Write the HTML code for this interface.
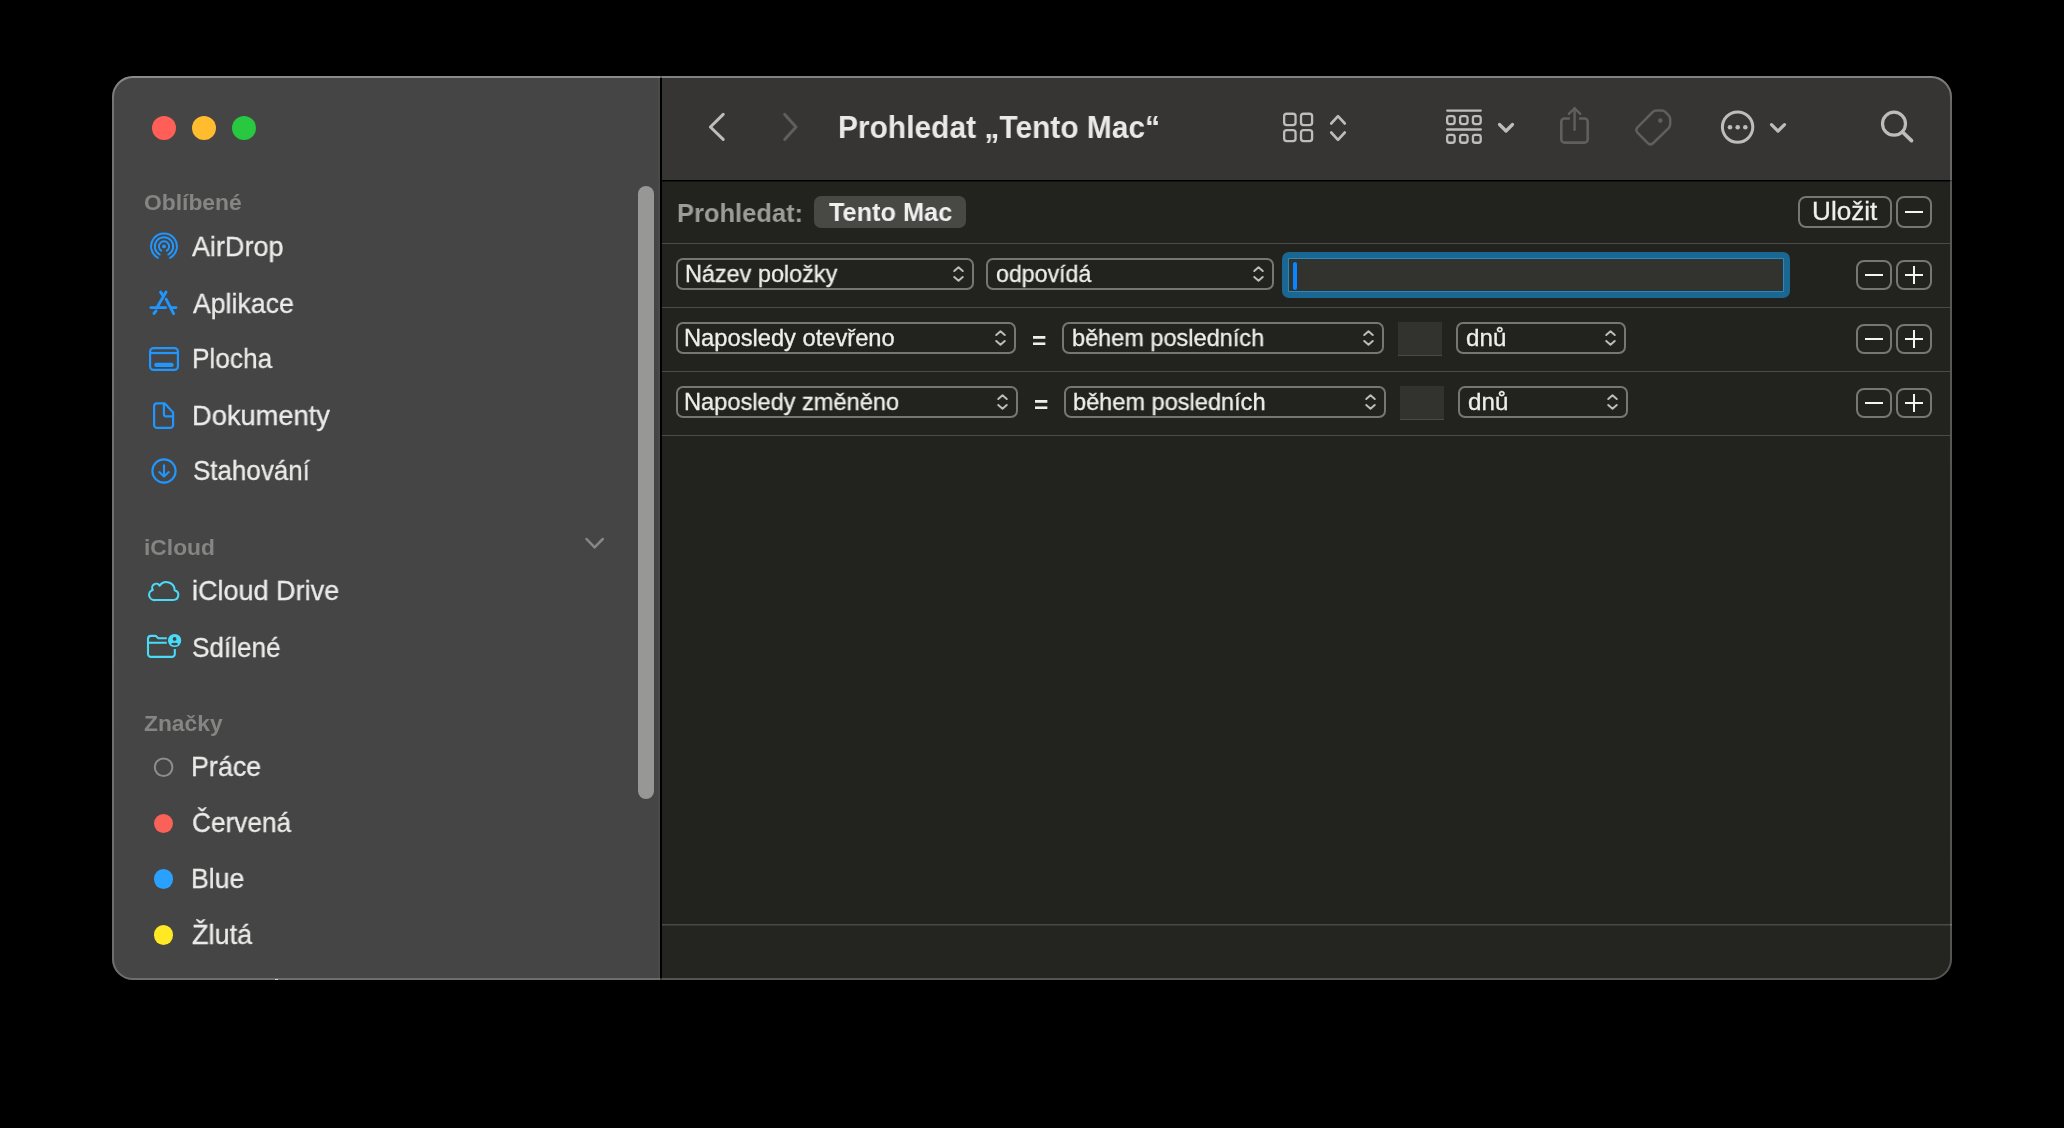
<!DOCTYPE html>
<html><head><meta charset="utf-8"><style>
html,body{margin:0;padding:0;background:#000;width:2064px;height:1128px;overflow:hidden;font-family:"Liberation Sans", sans-serif}
.t{position:absolute;white-space:nowrap;-webkit-font-smoothing:antialiased;will-change:transform}
svg{overflow:visible}
</style></head><body>
<div id="win" style="position:absolute;left:112px;top:76px;width:1840px;height:904px;border-radius:21px;overflow:hidden;background:#22221F">
<div style="position:absolute;left:0px;top:0px;width:548px;height:904px;background:#454545"></div>
<div style="position:absolute;left:546px;top:0px;width:2px;height:904px;background:#4a4a49"></div>
<div style="position:absolute;left:548px;top:0px;width:2px;height:904px;background:#000"></div>
<div style="position:absolute;left:550px;top:0px;width:1290px;height:104px;background:#363533"></div>
<div style="position:absolute;left:550px;top:104px;width:1290px;height:1px;background:#000"></div>
<div style="position:absolute;left:550px;top:105px;width:1290px;height:1px;background:#121211"></div>
<div style="position:absolute;left:550px;top:849px;width:1290px;height:55px;background:#242420"></div>
<div style="position:absolute;left:550px;top:848px;width:1290px;height:1px;background:#484844"></div>
<div style="position:absolute;left:550px;top:849px;width:1290px;height:1px;background:#373733"></div>
</div>
<svg style="position:absolute;left:112px;top:76px" width="1840" height="904" viewBox="0 0 1840 904"><defs><linearGradient id="bg1" gradientUnits="userSpaceOnUse" x1="0" y1="0" x2="0" y2="904"><stop offset="0" stop-color="#fff" stop-opacity="0.38"/><stop offset="0.03" stop-color="#fff" stop-opacity="0.25"/><stop offset="1" stop-color="#fff" stop-opacity="0.22"/></linearGradient></defs><rect x="1" y="1" width="1838" height="902" rx="20" ry="20" fill="none" stroke="url(#bg1)" stroke-width="2"/></svg>
<div style="position:absolute;left:275px;top:978.6px;width:3px;height:1.4px;background:#d0d0ce"></div>
<div style="position:absolute;left:152px;top:116px;width:24px;height:24px;border-radius:50%;background:#FF5F57"></div>
<div style="position:absolute;left:192px;top:116px;width:24px;height:24px;border-radius:50%;background:#FEBC2E"></div>
<div style="position:absolute;left:232px;top:116px;width:24px;height:24px;border-radius:50%;background:#28C840"></div>
<div style="position:absolute;left:638px;top:186px;width:16px;height:613px;border-radius:8px;background:#979795"></div>
<div class="t" style="left:143.55px;top:192.45px;font-size:21.8px;line-height:21.8px;color:#858584;font-weight:bold;transform:scaleX(1.0478);transform-origin:0 0;">Oblíbené</div>
<div class="t" style="left:143.55px;top:536.55px;font-size:21.8px;line-height:21.8px;color:#858584;font-weight:bold;transform:scaleX(1.0462);transform-origin:0 0;">iCloud</div>
<div class="t" style="left:143.85px;top:712.65px;font-size:21.8px;line-height:21.8px;color:#858584;font-weight:bold;transform:scaleX(1.0459);transform-origin:0 0;">Značky</div>
<div class="t" style="left:192.30px;top:233.48px;font-size:27.9px;line-height:27.9px;color:#ebebea;font-weight:normal;transform:scaleX(0.9681);transform-origin:0 0;-webkit-text-stroke:0.3px #ebebea;">AirDrop</div>
<div class="t" style="left:192.80px;top:289.68px;font-size:27.9px;line-height:27.9px;color:#ebebea;font-weight:normal;transform:scaleX(0.9562);transform-origin:0 0;-webkit-text-stroke:0.3px #ebebea;">Aplikace</div>
<div class="t" style="left:191.62px;top:345.08px;font-size:27.9px;line-height:27.9px;color:#ebebea;font-weight:normal;transform:scaleX(0.9405);transform-origin:0 0;-webkit-text-stroke:0.3px #ebebea;">Plocha</div>
<div class="t" style="left:191.54px;top:401.58px;font-size:27.9px;line-height:27.9px;color:#ebebea;font-weight:normal;transform:scaleX(0.9784);transform-origin:0 0;-webkit-text-stroke:0.3px #ebebea;">Dokumenty</div>
<div class="t" style="left:192.57px;top:456.68px;font-size:27.9px;line-height:27.9px;color:#ebebea;font-weight:normal;transform:scaleX(0.9312);transform-origin:0 0;-webkit-text-stroke:0.3px #ebebea;">Stahování</div>
<div class="t" style="left:192.23px;top:577.48px;font-size:27.9px;line-height:27.9px;color:#ebebea;font-weight:normal;transform:scaleX(0.9687);transform-origin:0 0;-webkit-text-stroke:0.3px #ebebea;">iCloud Drive</div>
<div class="t" style="left:192.26px;top:633.58px;font-size:27.9px;line-height:27.9px;color:#ebebea;font-weight:normal;transform:scaleX(0.9376);transform-origin:0 0;-webkit-text-stroke:0.3px #ebebea;">Sdílené</div>
<div class="t" style="left:191.27px;top:753.28px;font-size:27.9px;line-height:27.9px;color:#ebebea;font-weight:normal;transform:scaleX(0.9629);transform-origin:0 0;-webkit-text-stroke:0.3px #ebebea;">Práce</div>
<div class="t" style="left:191.86px;top:809.28px;font-size:27.9px;line-height:27.9px;color:#ebebea;font-weight:normal;transform:scaleX(0.9390);transform-origin:0 0;-webkit-text-stroke:0.3px #ebebea;">Červená</div>
<div class="t" style="left:191.49px;top:865.28px;font-size:27.9px;line-height:27.9px;color:#ebebea;font-weight:normal;transform:scaleX(0.9566);transform-origin:0 0;-webkit-text-stroke:0.3px #ebebea;">Blue</div>
<div class="t" style="left:192.23px;top:921.48px;font-size:27.9px;line-height:27.9px;color:#ebebea;font-weight:normal;transform:scaleX(0.9705);transform-origin:0 0;-webkit-text-stroke:0.3px #ebebea;">Žlutá</div>
<svg style="position:absolute;left:148px;top:230px" width="32" height="32" viewBox="0 0 32 32"><g fill="none" stroke="#2196FF" stroke-width="1.95" stroke-linecap="round"><path d="M10 27.82 A12.9 12.9 0 1 1 22 27.82"/><path d="M11.7 24.53 A9.2 9.2 0 1 1 20.3 24.53"/><path d="M13.2 20.66 A5.1 5.1 0 1 1 18.8 20.66"/></g><circle cx="16" cy="16.4" r="1.95" fill="#2196FF"/></svg>
<svg style="position:absolute;left:144px;top:284px" width="40" height="36" viewBox="0 0 40 36"><g fill="none" stroke="#2196FF" stroke-width="2.9" stroke-linecap="round"><path d="M22 8.1 L13.6 22.6"/><path d="M12.1 26.8 L9.9 29.5"/><path d="M16.6 8.1 L19 11.6"/><path d="M22.1 15.2 L29.6 29.6"/><path d="M6.9 23.6 H21.6"/><path d="M27.4 23.6 H31.9"/></g></svg>
<svg style="position:absolute;left:148px;top:346.4px" width="32" height="26" viewBox="0 0 32 26"><g fill="none" stroke="#2196FF" stroke-width="2.2"><rect x="2.1" y="2.1" width="27.8" height="21.8" rx="3.5"/><path d="M2 7 H30"/></g><rect x="6.2" y="16.8" width="19.5" height="4.2" rx="2" fill="#2196FF"/></svg>
<svg style="position:absolute;left:150px;top:400px" width="28" height="32" viewBox="0 0 28 32"><g fill="none" stroke="#2196FF" stroke-width="2.2" stroke-linejoin="round"><path d="M7.1 3.3 H14.6 L23.1 12.6 V24.9 A3 3 0 0 1 20.1 27.9 H7.1 A3 3 0 0 1 4.1 24.9 V6.3 A3 3 0 0 1 7.1 3.3 Z"/><path d="M13.9 3.5 V14.3 A2 2 0 0 0 15.9 16.3 H23.1"/></g></svg>
<svg style="position:absolute;left:148px;top:455px" width="32" height="32" viewBox="0 0 32 32"><g fill="none" stroke="#2196FF" stroke-width="2.1" stroke-linecap="round" stroke-linejoin="round"><circle cx="16" cy="16" r="11.6"/><path d="M16 10.2 V21"/><path d="M11.3 17.1 L16 21.5 L20.7 17.1"/></g></svg>
<svg style="position:absolute;left:142px;top:570px" width="44" height="36" viewBox="0 0 44 36"><g fill="none" stroke="#48DCF8" stroke-width="2.1" stroke-linejoin="round"><path d="M13.2 30 H31.3 A5 5 0 0 0 32.7 20.2 A8.3 8.3 0 0 0 17.6 15.6 A4 4 0 0 0 10.8 19.9 A5.2 5.2 0 0 0 13.2 30 Z"/></g></svg>
<svg style="position:absolute;left:146px;top:632px" width="38" height="28" viewBox="0 0 38 28"><g fill="none" stroke="#48DCF8" stroke-width="2.1" stroke-linejoin="round" stroke-linecap="butt"><path d="M20.8 10.8 H2 M20.8 6.2 H12.3 L10.4 4.4 A1.6 1.6 0 0 0 9.3 3.9 H5 A3 3 0 0 0 2 6.9 V21.9 A3 3 0 0 0 5 24.9 H25.8 A3 3 0 0 0 28.8 21.9 V17"/></g><circle cx="28.6" cy="8.5" r="6.6" fill="#48DCF8"/><circle cx="28.6" cy="6.9" r="1.9" fill="#454545"/><ellipse cx="28.6" cy="12.1" rx="3.3" ry="1.3" fill="#454545"/></svg>
<svg style="position:absolute;left:582px;top:535px" width="24" height="16" viewBox="0 0 24 16"><path d="M4.5 4 L12.6 12.3 L20.8 4" fill="none" stroke="#878786" stroke-width="2.5" stroke-linecap="round" stroke-linejoin="round"/></svg>
<svg style="position:absolute;left:153px;top:757px" width="22" height="22" viewBox="0 0 22 22"><circle cx="10.6" cy="10.2" r="8.8" fill="none" stroke="#8d8d8c" stroke-width="2"/></svg>
<div style="position:absolute;left:153.9px;top:813.5px;width:19.6px;height:19.6px;border-radius:50%;background:#FA6159"></div>
<div style="position:absolute;left:153.9px;top:869.2px;width:19.6px;height:19.6px;border-radius:50%;background:#2AA0FF"></div>
<div style="position:absolute;left:153.9px;top:925.1px;width:19.6px;height:19.6px;border-radius:50%;background:#FFE925"></div>
<svg style="position:absolute;left:700px;top:105px" width="110" height="44" viewBox="0 0 110 44"><path d="M23.2 9.4 L10.4 22 L23.2 34.4" fill="none" stroke="#bdbdbc" stroke-width="3" stroke-linecap="round" stroke-linejoin="round"/><path d="M84.7 9.4 L96 22 L84.7 34.4" fill="none" stroke="#5f5f5e" stroke-width="3" stroke-linecap="round" stroke-linejoin="round"/></svg>
<div class="t" style="left:837.93px;top:111.01px;font-size:32px;line-height:32px;color:#e9e9e8;font-weight:bold;transform:scaleX(0.9353);transform-origin:0 0;">Prohledat „Tento Mac“</div>
<svg style="position:absolute;left:1278px;top:105px" width="76" height="44" viewBox="0 0 76 44"><g fill="none" stroke="#bdbdbc" stroke-width="2.3"><rect x="6.15" y="8.75" width="11.4" height="11.3" rx="2.6"/><rect x="23" y="8.75" width="11.1" height="11.3" rx="2.6"/><rect x="6.15" y="25.15" width="11.4" height="11.0" rx="2.6"/><rect x="23" y="25.15" width="11.1" height="11.0" rx="2.6"/></g><g fill="none" stroke="#bdbdbc" stroke-width="2.6" stroke-linecap="round" stroke-linejoin="round"><path d="M53.2 18.5 L60 11.2 L66.8 18.5"/><path d="M53.2 27.5 L60 34.8 L66.8 27.5"/></g></svg>
<svg style="position:absolute;left:1440px;top:100px" width="80" height="50" viewBox="0 0 80 50"><g fill="none" stroke="#bdbdbc" stroke-width="2.3" stroke-linecap="round"><path d="M7.2 10.6 H40.8"/><path d="M7.2 29.5 H40.8"/><rect x="7.15" y="16.05" width="7.5" height="8.0" rx="2.3"/><rect x="20.05" y="16.05" width="7.5" height="8.0" rx="2.3"/><rect x="32.9" y="16.05" width="7.8" height="8.0" rx="2.3"/><rect x="7.15" y="34.95" width="7.5" height="7.8" rx="2.3"/><rect x="20.05" y="34.95" width="7.5" height="7.8" rx="2.3"/><rect x="32.9" y="34.95" width="7.8" height="7.8" rx="2.3"/></g><path d="M59.5 24.5 L66 31 L72.5 24.5" fill="none" stroke="#bdbdbc" stroke-width="3.2" stroke-linecap="round" stroke-linejoin="round"/></svg>
<svg style="position:absolute;left:1552px;top:100px" width="44" height="50" viewBox="0 0 44 50"><g fill="none" stroke="#5f5f5e" stroke-width="2.6" stroke-linejoin="round"><path d="M17.9 18.5 H12.5 A3.2 3.2 0 0 0 9.3 21.7 V39.4 A3.2 3.2 0 0 0 12.5 42.6 H32.5 A3.2 3.2 0 0 0 35.7 39.4 V21.7 A3.2 3.2 0 0 0 32.5 18.5 H27"/></g><g fill="none" stroke="#5f5f5e" stroke-width="2.4" stroke-linecap="round" stroke-linejoin="round"><path d="M22.6 8.3 V29.8"/><path d="M16.9 13.9 L22.6 8.3 L28.3 13.9"/></g></svg>
<svg style="position:absolute;left:1628px;top:102px" width="50" height="50" viewBox="0 0 50 50"><g fill="none" stroke="#5f5f5e" stroke-width="2.5" stroke-linejoin="round"><path d="M24.35 10.28 Q26.10 8.50 28.60 8.50 L33.90 8.50 Q35.90 8.50 37.28 9.95 L40.82 13.65 Q42.20 15.10 42.20 17.10 L42.20 22.10 Q42.20 24.60 40.41 26.34 L25.27 41.02 Q22.40 43.80 19.60 40.94 L9.70 30.86 Q6.90 28.00 9.71 25.15 Z"/></g><circle cx="32.3" cy="18.6" r="2.3" fill="#5f5f5e"/></svg>
<svg style="position:absolute;left:1716px;top:105px" width="80" height="44" viewBox="0 0 80 44"><circle cx="21.6" cy="22.1" r="15.2" fill="none" stroke="#bdbdbc" stroke-width="3"/><circle cx="14" cy="22.3" r="2.3" fill="#bdbdbc"/><circle cx="21.7" cy="22.3" r="2.3" fill="#bdbdbc"/><circle cx="29.3" cy="22.3" r="2.3" fill="#bdbdbc"/><path d="M55.5 19.6 L62 26.1 L68.5 19.6" fill="none" stroke="#bdbdbc" stroke-width="3.2" stroke-linecap="round" stroke-linejoin="round"/></svg>
<svg style="position:absolute;left:1870px;top:100px" width="50" height="50" viewBox="0 0 50 50"><circle cx="24" cy="23.7" r="11.5" fill="none" stroke="#bdbdbc" stroke-width="3.2"/><path d="M32.5 32 L41.5 40.6" fill="none" stroke="#bdbdbc" stroke-width="3.7" stroke-linecap="round"/></svg>
<div class="t" style="left:676.68px;top:199.87px;font-size:26.5px;line-height:26.5px;color:#9d9d98;font-weight:bold;transform:scaleX(0.9614);transform-origin:0 0;">Prohledat:</div>
<div style="position:absolute;left:814px;top:196px;width:152px;height:32px;border-radius:7px;background:#484845"></div>
<div class="t" style="left:829.20px;top:199.14px;font-size:26.3px;line-height:26.3px;color:#f0f0ef;font-weight:bold;transform:scaleX(0.9622);transform-origin:0 0;">Tento Mac</div>
<div style="position:absolute;left:662px;top:243px;width:1288px;height:1px;background:#4b4b47"></div>
<div style="position:absolute;left:662px;top:307px;width:1288px;height:1px;background:#4b4b47"></div>
<div style="position:absolute;left:662px;top:371px;width:1288px;height:1px;background:#4b4b47"></div>
<div style="position:absolute;left:662px;top:435px;width:1288px;height:1px;background:#4b4b47"></div>
<div style="position:absolute;left:1798px;top:196px;width:94px;height:32px;border:2px solid #777772;border-radius:8px;box-sizing:border-box"></div>
<div class="t" style="left:1811.66px;top:199.14px;font-size:25.7px;line-height:25.7px;color:#eeeeea;font-weight:normal;transform:scaleX(1.0177);transform-origin:0 0;-webkit-text-stroke:0.3px #eeeeea;">Uložit</div>
<div style="position:absolute;left:1896px;top:196px;width:36px;height:32px;border:2px solid #777772;border-radius:8px;box-sizing:border-box"></div>
<div style="position:absolute;left:1905px;top:211px;width:18px;height:2px;background:#f4f4f0"></div>
<div style="position:absolute;left:676px;top:258px;width:298px;height:32px;border:2px solid #777772;border-radius:7px;box-sizing:border-box"></div>
<div class="t" style="left:684.72px;top:263.14px;font-size:23.7px;line-height:23.7px;color:#eeeeea;font-weight:normal;transform:scaleX(0.9888);transform-origin:0 0;-webkit-text-stroke:0.3px #eeeeea;">Název položky</div>
<svg style="position:absolute;left:951px;top:264.0px" width="15" height="20" viewBox="0 0 15 20"><g fill="none" stroke="#bcbcb8" stroke-width="2" stroke-linecap="round" stroke-linejoin="round"><path d="M3.25 7.0 L7.5 3.2 L11.75 7.0"/><path d="M3.25 13.0 L7.5 16.8 L11.75 13.0"/></g></svg>
<div style="position:absolute;left:986px;top:258px;width:288px;height:32px;border:2px solid #777772;border-radius:7px;box-sizing:border-box"></div>
<div class="t" style="left:995.72px;top:263.14px;font-size:23.7px;line-height:23.7px;color:#eeeeea;font-weight:normal;transform:scaleX(0.9784);transform-origin:0 0;-webkit-text-stroke:0.3px #eeeeea;">odpovídá</div>
<svg style="position:absolute;left:1251px;top:264.0px" width="15" height="20" viewBox="0 0 15 20"><g fill="none" stroke="#bcbcb8" stroke-width="2" stroke-linecap="round" stroke-linejoin="round"><path d="M3.25 7.0 L7.5 3.2 L11.75 7.0"/><path d="M3.25 13.0 L7.5 16.8 L11.75 13.0"/></g></svg>
<div style="position:absolute;left:1282px;top:252px;width:508px;height:46px;border-radius:7px;background:#1b6794"></div>
<div style="position:absolute;left:1288px;top:258px;width:496px;height:34px;background:#2b88bd"></div>
<div style="position:absolute;left:1289px;top:259px;width:494px;height:32px;background:#32322e"></div>
<div style="position:absolute;left:1293px;top:262px;width:4.3px;height:28px;border-radius:2.2px;background:#0a84ff"></div>
<div style="position:absolute;left:1856px;top:260px;width:36px;height:30px;border:2px solid #777772;border-radius:8px;box-sizing:border-box"></div>
<div style="position:absolute;left:1865px;top:274px;width:18px;height:2px;background:#f4f4f0"></div>
<div style="position:absolute;left:1896px;top:260px;width:36px;height:30px;border:2px solid #777772;border-radius:8px;box-sizing:border-box"></div>
<div style="position:absolute;left:1905px;top:274px;width:18px;height:2px;background:#f4f4f0"></div>
<div style="position:absolute;left:1913px;top:266px;width:2px;height:18px;background:#f4f4f0"></div>
<div style="position:absolute;left:676px;top:322px;width:340px;height:32px;border:2px solid #777772;border-radius:7px;box-sizing:border-box"></div>
<div class="t" style="left:684.30px;top:327.14px;font-size:23.7px;line-height:23.7px;color:#eeeeea;font-weight:normal;-webkit-text-stroke:0.3px #eeeeea;">Naposledy otevřeno</div>
<svg style="position:absolute;left:993px;top:328.0px" width="15" height="20" viewBox="0 0 15 20"><g fill="none" stroke="#bcbcb8" stroke-width="2" stroke-linecap="round" stroke-linejoin="round"><path d="M3.25 7.0 L7.5 3.2 L11.75 7.0"/><path d="M3.25 13.0 L7.5 16.8 L11.75 13.0"/></g></svg>
<div class="t" style="left:1031.77px;top:329.94px;font-size:23.7px;line-height:23.7px;color:#eeeeea;font-weight:bold;transform:scaleX(1.0333);transform-origin:0 0;">=</div>
<div style="position:absolute;left:1062px;top:322px;width:322px;height:32px;border:2px solid #777772;border-radius:7px;box-sizing:border-box"></div>
<div class="t" style="left:1071.81px;top:327.14px;font-size:23.7px;line-height:23.7px;color:#eeeeea;font-weight:normal;transform:scaleX(0.9922);transform-origin:0 0;-webkit-text-stroke:0.3px #eeeeea;">během posledních</div>
<svg style="position:absolute;left:1361px;top:328.0px" width="15" height="20" viewBox="0 0 15 20"><g fill="none" stroke="#bcbcb8" stroke-width="2" stroke-linecap="round" stroke-linejoin="round"><path d="M3.25 7.0 L7.5 3.2 L11.75 7.0"/><path d="M3.25 13.0 L7.5 16.8 L11.75 13.0"/></g></svg>
<div style="position:absolute;left:1398px;top:322px;width:44px;height:34px;background:#32322e;border-bottom:1px solid #4a4a46;box-sizing:border-box"></div>
<div style="position:absolute;left:1456px;top:322px;width:170px;height:32px;border:2px solid #777772;border-radius:7px;box-sizing:border-box"></div>
<div class="t" style="left:1465.78px;top:327.14px;font-size:23.7px;line-height:23.7px;color:#eeeeea;font-weight:normal;transform:scaleX(1.0216);transform-origin:0 0;-webkit-text-stroke:0.3px #eeeeea;">dnů</div>
<svg style="position:absolute;left:1603px;top:328.0px" width="15" height="20" viewBox="0 0 15 20"><g fill="none" stroke="#bcbcb8" stroke-width="2" stroke-linecap="round" stroke-linejoin="round"><path d="M3.25 7.0 L7.5 3.2 L11.75 7.0"/><path d="M3.25 13.0 L7.5 16.8 L11.75 13.0"/></g></svg>
<div style="position:absolute;left:1856px;top:324px;width:36px;height:30px;border:2px solid #777772;border-radius:8px;box-sizing:border-box"></div>
<div style="position:absolute;left:1865px;top:338px;width:18px;height:2px;background:#f4f4f0"></div>
<div style="position:absolute;left:1896px;top:324px;width:36px;height:30px;border:2px solid #777772;border-radius:8px;box-sizing:border-box"></div>
<div style="position:absolute;left:1905px;top:338px;width:18px;height:2px;background:#f4f4f0"></div>
<div style="position:absolute;left:1913px;top:330px;width:2px;height:18px;background:#f4f4f0"></div>
<div style="position:absolute;left:676px;top:386px;width:342px;height:32px;border:2px solid #777772;border-radius:7px;box-sizing:border-box"></div>
<div class="t" style="left:684.31px;top:391.14px;font-size:23.7px;line-height:23.7px;color:#eeeeea;font-weight:normal;transform:scaleX(0.9962);transform-origin:0 0;-webkit-text-stroke:0.3px #eeeeea;">Naposledy změněno</div>
<svg style="position:absolute;left:995px;top:392.0px" width="15" height="20" viewBox="0 0 15 20"><g fill="none" stroke="#bcbcb8" stroke-width="2" stroke-linecap="round" stroke-linejoin="round"><path d="M3.25 7.0 L7.5 3.2 L11.75 7.0"/><path d="M3.25 13.0 L7.5 16.8 L11.75 13.0"/></g></svg>
<div class="t" style="left:1033.77px;top:393.94px;font-size:23.7px;line-height:23.7px;color:#eeeeea;font-weight:bold;transform:scaleX(1.0333);transform-origin:0 0;">=</div>
<div style="position:absolute;left:1064px;top:386px;width:322px;height:32px;border:2px solid #777772;border-radius:7px;box-sizing:border-box"></div>
<div class="t" style="left:1073.41px;top:391.14px;font-size:23.7px;line-height:23.7px;color:#eeeeea;font-weight:normal;transform:scaleX(0.9943);transform-origin:0 0;-webkit-text-stroke:0.3px #eeeeea;">během posledních</div>
<svg style="position:absolute;left:1363px;top:392.0px" width="15" height="20" viewBox="0 0 15 20"><g fill="none" stroke="#bcbcb8" stroke-width="2" stroke-linecap="round" stroke-linejoin="round"><path d="M3.25 7.0 L7.5 3.2 L11.75 7.0"/><path d="M3.25 13.0 L7.5 16.8 L11.75 13.0"/></g></svg>
<div style="position:absolute;left:1400px;top:386px;width:44px;height:34px;background:#32322e;border-bottom:1px solid #4a4a46;box-sizing:border-box"></div>
<div style="position:absolute;left:1458px;top:386px;width:170px;height:32px;border:2px solid #777772;border-radius:7px;box-sizing:border-box"></div>
<div class="t" style="left:1467.68px;top:391.14px;font-size:23.7px;line-height:23.7px;color:#eeeeea;font-weight:normal;transform:scaleX(1.0216);transform-origin:0 0;-webkit-text-stroke:0.3px #eeeeea;">dnů</div>
<svg style="position:absolute;left:1605px;top:392.0px" width="15" height="20" viewBox="0 0 15 20"><g fill="none" stroke="#bcbcb8" stroke-width="2" stroke-linecap="round" stroke-linejoin="round"><path d="M3.25 7.0 L7.5 3.2 L11.75 7.0"/><path d="M3.25 13.0 L7.5 16.8 L11.75 13.0"/></g></svg>
<div style="position:absolute;left:1856px;top:388px;width:36px;height:30px;border:2px solid #777772;border-radius:8px;box-sizing:border-box"></div>
<div style="position:absolute;left:1865px;top:402px;width:18px;height:2px;background:#f4f4f0"></div>
<div style="position:absolute;left:1896px;top:388px;width:36px;height:30px;border:2px solid #777772;border-radius:8px;box-sizing:border-box"></div>
<div style="position:absolute;left:1905px;top:402px;width:18px;height:2px;background:#f4f4f0"></div>
<div style="position:absolute;left:1913px;top:394px;width:2px;height:18px;background:#f4f4f0"></div>
</body></html>
